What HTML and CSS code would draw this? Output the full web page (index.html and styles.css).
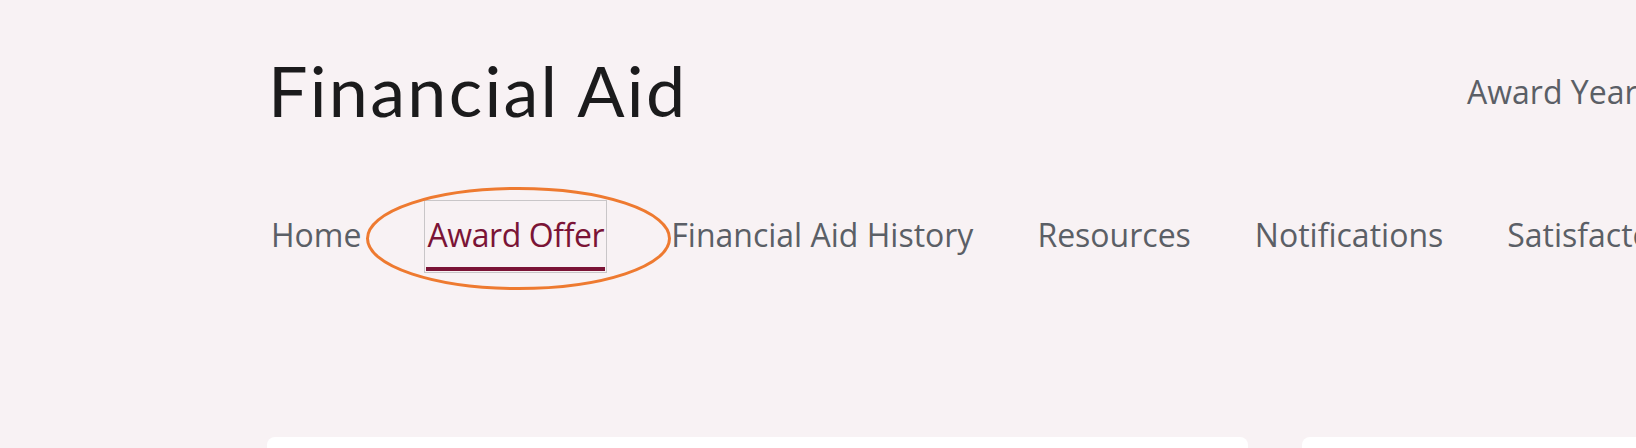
FILE: index.html
```html
<!DOCTYPE html>
<html lang="en">
<head>
<meta charset="utf-8">
<title>Financial Aid</title>
<link rel="stylesheet" href="styles.css">
</head>
<body>
<div class="page">
  <header class="header">
    <h1 class="title">Financial Aid</h1>
    <div class="award-year">Award Year 2024 - 2025</div>
  </header>
  <nav class="nav">
    <a class="nav-link">Home</a>
    <a class="nav-link active">Award Offer</a>
    <a class="nav-link">Financial Aid History</a>
    <a class="nav-link">Resources</a>
    <a class="nav-link">Notifications</a>
    <a class="nav-link">Satisfactory Academic Progress</a>
    <svg class="highlight" width="311" height="107" viewBox="0 0 311 107" aria-hidden="true">
      <ellipse cx="155.5" cy="53.5" rx="151" ry="50" fill="none" stroke="#ee7a30" stroke-width="3"/>
    </svg>
  </nav>
  <section class="cards">
    <div class="card card-main"></div>
    <div class="card card-side"></div>
  </section>
</div>
</body>
</html>
```
FILE: styles.css
```css
html, body {
  margin: 0;
  padding: 0;
  overflow: hidden;
  background: #f8f2f4;
}
body {
  width: 1636px;
  height: 448px;
}
.page {
  padding-left: 270px;
  width: 1366px;
  height: 448px;
  overflow: hidden;
}
.header {
  display: grid;
  grid-template-columns: 1197px auto;
  align-items: start;
  padding-top: 48px;
}
.title {
  margin: 0 0 0 -2px;
  font-family: Lato, "Noto Sans", sans-serif;
  font-weight: 400;
  font-size: 70px;
  line-height: 84px;
  color: #1b1b1c;
  letter-spacing: 2.3px;
  white-space: nowrap;
}
.award-year {
  font-family: "Open Sans", sans-serif;
  font-size: 32px;
  line-height: 44px;
  color: #5b5f66;
  white-space: nowrap;
  padding-top: 22px;
}
.nav {
  position: relative;
  display: flex;
  gap: 60px;
  margin-top: 70px;
  margin-left: -1px;
  white-space: nowrap;
}
.nav-link {
  font-family: "Open Sans", sans-serif;
  font-size: 32px;
  line-height: 44px;
  color: #5b5f66;
  padding: 11px 2px 10px;
  border-bottom: 4px solid transparent;
}
.nav-link:first-child {
  margin-right: 3px;
}
.nav-link.active {
  color: #7b1436;
  border-bottom-color: #7b1436;
  outline: 1px solid #c9c6c8;
  outline-offset: 1px;
  letter-spacing: -0.4px;
  padding-left: 1px;
  padding-right: 1px;
  margin-right: 4px;
}
.highlight {
  position: absolute;
  left: 94px;
  top: -17px;
}
.cards {
  display: flex;
  gap: 54px;
  margin-top: 166px;
  margin-left: -3px;
}
.card {
  background: #ffffff;
  border-radius: 8px;
  height: 200px;
  flex: none;
}
.card-main {
  width: 981px;
}
.card-side {
  width: 400px;
}
```
